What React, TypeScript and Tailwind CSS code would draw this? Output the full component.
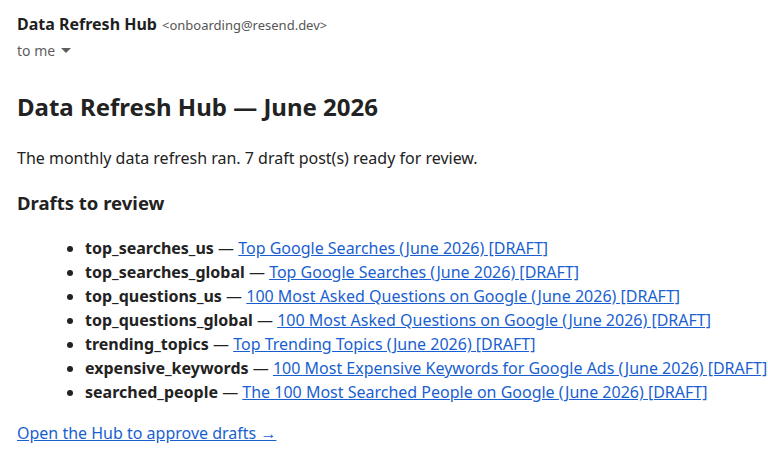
const drafts = [
  ["top_searches_us", "Top Google Searches (June 2026) [DRAFT]"],
  ["top_searches_global", "Top Google Searches (June 2026) [DRAFT]"],
  ["top_questions_us", "100 Most Asked Questions on Google (June 2026) [DRAFT]"],
  ["top_questions_global", "100 Most Asked Questions on Google (June 2026) [DRAFT]"],
  ["trending_topics", "Top Trending Topics (June 2026) [DRAFT]"],
  ["expensive_keywords", "100 Most Expensive Keywords for Google Ads (June 2026) [DRAFT]"],
  ["searched_people", "The 100 Most Searched People on Google (June 2026) [DRAFT]"],
];

const App = () => {
  return (
    <div className="w-[768px] h-[460px] overflow-hidden bg-white pl-[17px] pt-[12px] text-[#222]">
      <div className="font-['Roboto',sans-serif]">
        <div className="flex items-baseline gap-[5px]">
          <span className="text-[16px] font-bold text-[#1f1f1f]">Data Refresh Hub</span>
          <span className="text-[13px] text-[#555]">&lt;onboarding@resend.dev&gt;</span>
        </div>
        <div className="flex items-center gap-[6px] text-[14px] text-[#5e5e5e] mt-[4px]">
          to me
          <svg width="10" height="6" viewBox="0 0 10 6">
            <path d="M0 0h10L5 5z" fill="#5e5e5e" />
          </svg>
        </div>
      </div>
      <div className="font-['Liberation_Sans',Arial,sans-serif]">
        <h1 className="text-[24px] font-bold mt-[31px] leading-[30px]">Data Refresh Hub — June 2026</h1>
        <p className="text-[16px] mt-[26px] leading-[20px]">
          The monthly data refresh ran. 7 draft post(s) ready for review.
        </p>
        <h2 className="text-[18.5px] font-bold mt-[23px] leading-[24px]">Drafts to review</h2>
        <ul className="list-disc pl-[68px] mt-[21px] text-[16px] leading-[24px]">
          {drafts.map(([k, t]) => (
            <li key={k}>
              <b>{k}</b> — <a href="#" className="text-[#1a5fd0] underline">{t}</a>
            </li>
          ))}
        </ul>
        <a href="#" className="block mt-[19px] text-[16px] text-[#1a5fd0] underline leading-[20px]">
          Open the Hub to approve drafts →
        </a>
      </div>
    </div>
  );
};

export default App;
